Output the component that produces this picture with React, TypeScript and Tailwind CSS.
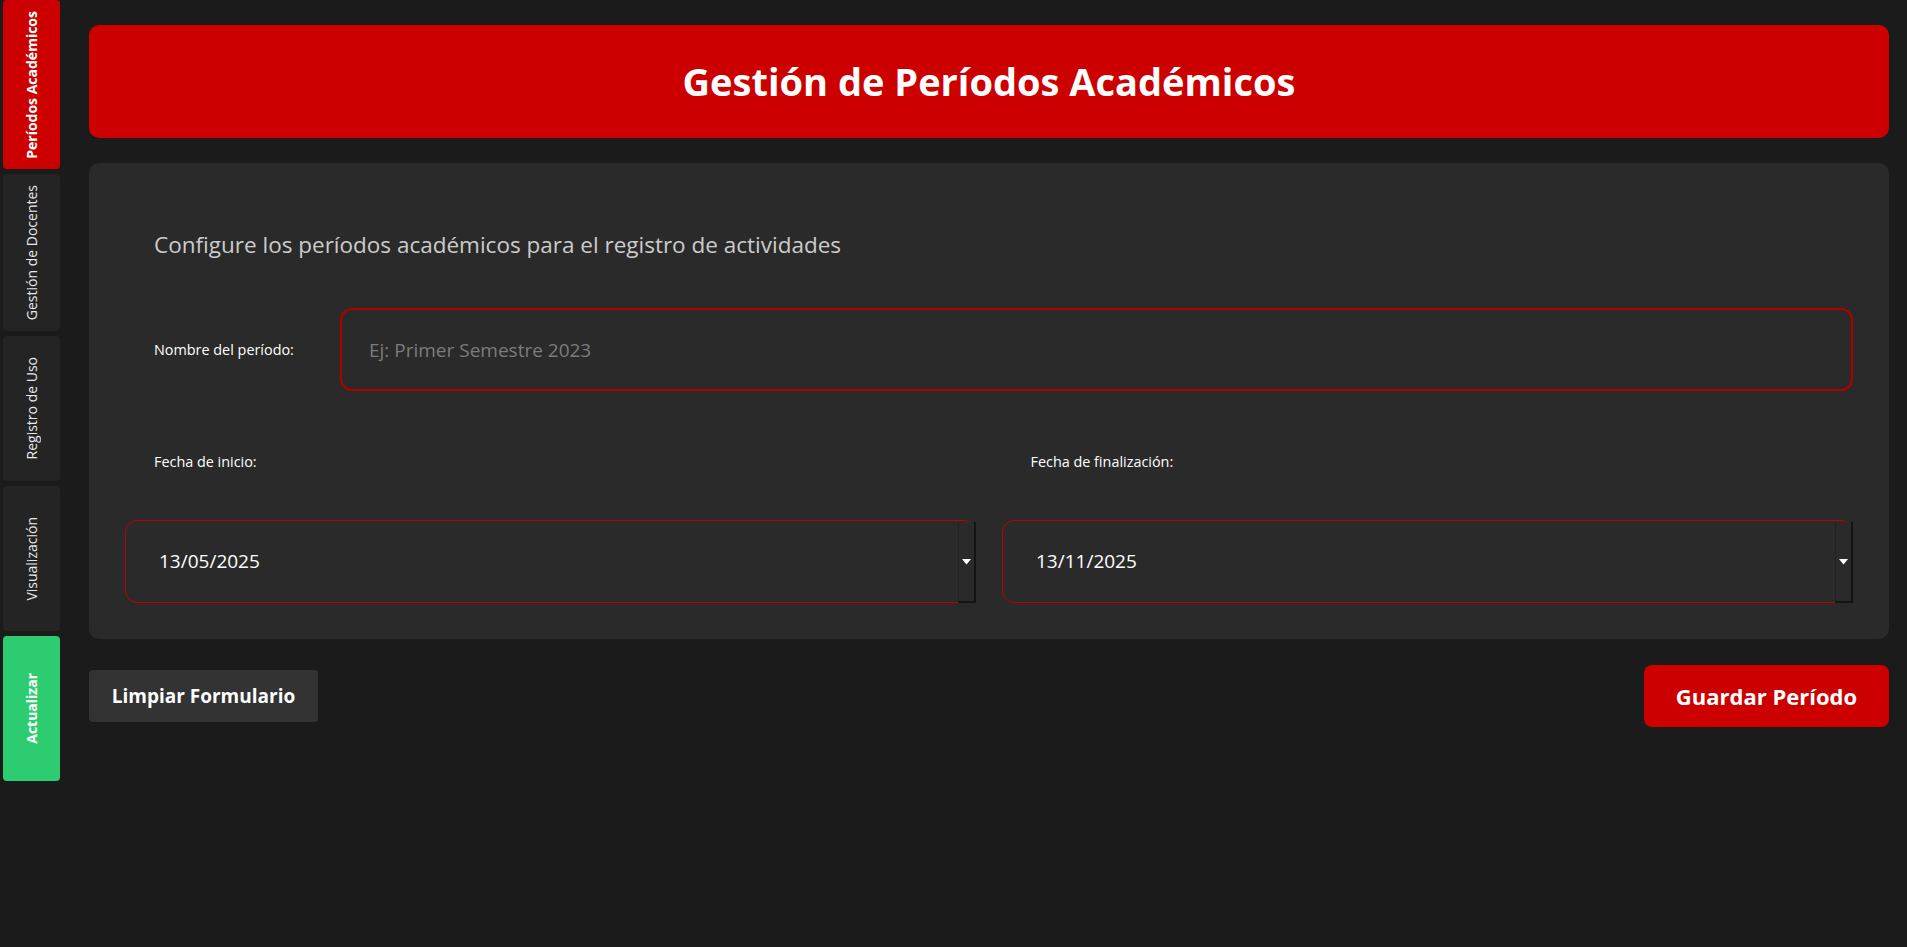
import { useState } from 'react';

const tabs = [
  { label: 'Períodos Académicos', h: 'h-[169px]', style: 'bg-[#cc0000] font-bold text-white' },
  { label: 'Gestión de Docentes', h: 'h-[157px]', style: 'bg-[#242424] text-[#e8e8e8]' },
  { label: 'Registro de Uso', h: 'h-[145px]', style: 'bg-[#242424] text-[#e8e8e8]' },
  { label: 'Visualización', h: 'h-[145px]', style: 'bg-[#242424] text-[#e8e8e8]' },
  { label: 'Actualizar', h: 'h-[145px]', style: 'bg-[#2ecc71] font-bold text-white' },
];

function DateField({ value }: { value: string }) {
  return (
    <div className="relative flex h-[83px] flex-1 items-center rounded-[12px] border-[1.5px] border-[#c00000] bg-[#2a2a2a] pl-[33px] text-[19px] text-white">
      {value}
      <div className="absolute top-[1px] right-[-1px] bottom-[-1px] flex w-[18px] items-center justify-center border-r-2 border-b-2 border-l border-[#141414] border-l-[#222] bg-[#2a2a2a]">
        <svg width="9" height="6" viewBox="0 0 9 6">
          <path d="M0 0 L9 0 L4.5 5.5 Z" fill="#ffffff" />
        </svg>
      </div>
    </div>
  );
}

export default function App() {
  const [name, setName] = useState('');

  return (
    <div
      className="flex min-h-[947px] w-full bg-[#1b1b1b] text-white"
      style={{ fontFamily: '"Open Sans", "Noto Sans", sans-serif' }}
    >
      <nav className="flex w-[63px] shrink-0 flex-col gap-[5px] px-[3px]">
        {tabs.map((t) => (
          <div key={t.label} className={`flex w-full items-center justify-center rounded-[4px] ${t.h} ${t.style}`}>
            <span className="rotate-180 text-[14px] whitespace-nowrap [writing-mode:vertical-rl]">{t.label}</span>
          </div>
        ))}
      </nav>

      <main className="flex flex-1 flex-col pt-[25px] pr-[18px] pl-[26px]">
        <header className="flex h-[113px] items-center justify-center rounded-[10px] bg-[#cc0000]">
          <h1 className="text-[38px] font-bold text-white">Gestión de Períodos Académicos</h1>
        </header>

        <section className="mt-[25px] flex flex-col rounded-[10px] bg-[#2a2a2a] px-[36px] pt-[36px] pb-[36px]">
          <div className="flex h-[92px] items-center pl-[29px] text-[22.5px] text-[#cccccc]">
            Configure los períodos académicos para el registro de actividades
          </div>

          <div className="mt-[17px] flex items-center">
            <label className="w-[215px] shrink-0 pl-[29px] text-[14.4px] text-white">Nombre del período:</label>
            <input
              value={name}
              onChange={(e) => setName(e.target.value)}
              placeholder="Ej: Primer Semestre 2023"
              className="h-[83px] flex-1 rounded-[12px] border-2 border-[#b00000] bg-[#2a2a2a] pl-[27px] text-[19px] text-white outline-none placeholder:text-[#7c7c7c]"
            />
          </div>

          <div className="mt-[51px] flex h-[40px] items-center gap-[26px] text-[14.4px] text-white">
            <div className="flex-1 pl-[29px]">Fecha de inicio:</div>
            <div className="flex-1 pl-[28px]">Fecha de finalización:</div>
          </div>

          <div className="mt-[38px] flex gap-[26px]">
            <DateField value="13/05/2025" />
            <DateField value="13/11/2025" />
          </div>
        </section>

        <div className="mt-[26px] flex items-center justify-between">
          <button className="h-[52px] w-[229px] rounded-[4px] bg-[#333333] text-[19px] font-bold text-white">
            Limpiar Formulario
          </button>
          <button className="h-[62px] w-[245px] rounded-[8px] bg-[#cc0000] text-[22px] font-bold text-white">
            Guardar Período
          </button>
        </div>
      </main>
    </div>
  );
}
